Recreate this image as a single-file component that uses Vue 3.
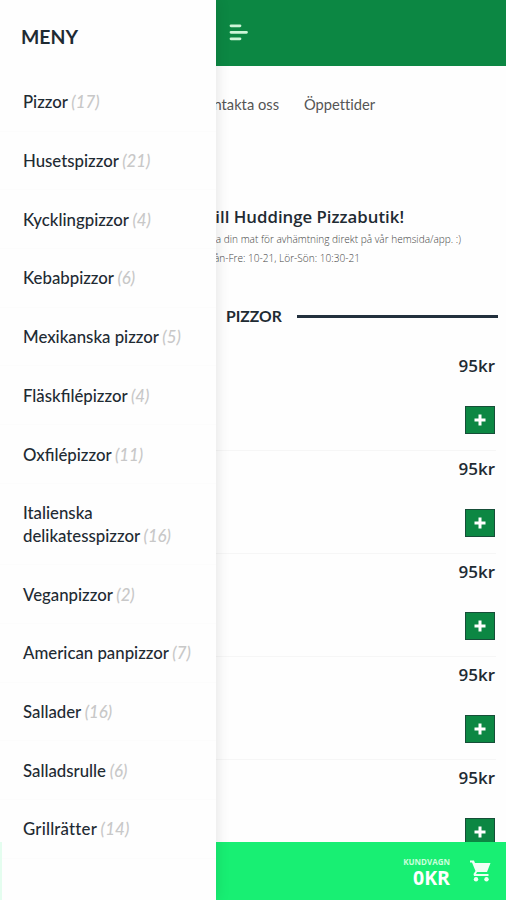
<script setup>
const categories = [
  ['Pizzor', 17],
  ['Husetspizzor', 21],
  ['Kycklingpizzor', 4],
  ['Kebabpizzor', 6],
  ['Mexikanska pizzor', 5],
  ['Fläskfilépizzor', 4],
  ['Oxfilépizzor', 11],
  ['Italienska delikatesspizzor', 16],
  ['Veganpizzor', 2],
  ['American panpizzor', 7],
  ['Sallader', 16],
  ['Salladsrulle', 6],
  ['Grillrätter', 14],
]
const prices = ['95kr', '95kr', '95kr', '95kr', '95kr']
</script>

<template>
  <div class="screen">
    <div class="page">
      <header class="topbar">
        <svg class="burger" viewBox="0 0 20 18" width="20" height="18">
          <path d="M3 2.8H12M3 9.300H18.500M3 15.800H12" stroke="#cdf5d8" stroke-width="2.8" stroke-linecap="round" />
        </svg>
      </header>
      <nav class="nav">
        <a class="contact">Kontakta oss</a>
        <a>Öppettider</a>
      </nav>
      <section class="intro">
        <h1>till Huddinge Pizzabutik!</h1>
        <p class="lead">beställa din mat för avhämtning direkt på vår hemsida/app. :)</p>
        <p class="hours">Mån-Fre: 10-21, Lör-Sön: 10:30-21</p>
      </section>
      <div class="section-title">
        <h2>PIZZOR</h2>
        <span class="rule"></span>
      </div>
      <div class="products">
        <div v-for="(price, i) in prices" :key="i" class="product">
          <span class="price">{{ price }}</span>
          <button class="add">
            <svg viewBox="0 0 12 12" width="12" height="12">
              <path d="M6 0.500V11.500M0.500 6H11.500" stroke="#fff" stroke-width="3" />
            </svg>
          </button>
        </div>
      </div>
    </div>

    <footer class="cart">
      <div class="cart-text">
        <span class="cart-label">KUNDVAGN</span>
        <span class="cart-total">0KR</span>
      </div>
      <svg class="cart-icon" viewBox="0 0 21 22" width="21" height="22">
        <path fill="#f0fff5" d="M0 0.500H4L5 3H20.500L17 12H7L6 14H18.500V16H4L3.500 14 5.500 11 2 2.500H0Z" />
        <circle cx="6" cy="19.200" r="2.200" fill="#f0fff5" />
        <circle cx="16.500" cy="19.200" r="2.200" fill="#f0fff5" />
      </svg>
    </footer>

    <aside class="drawer">
      <h3>MENY</h3>
      <ul>
        <li v-for="[name, count] in categories" :key="name" :class="{ plain: name.includes('tt') }">
          {{ name }} <em>({{ count }})</em>
        </li>
      </ul>
      <div class="drawer-foot"></div>
    </aside>
  </div>
</template>

<style>
body {
  margin: 0;
}
</style>

<style scoped>
.screen {
  position: relative;
  width: 506px;
  height: 900px;
  overflow: hidden;
  background: #fefefe;
  color: #1f2b33;
  font-family: "Open Sans", sans-serif;
}
h1, h2, h3, p, ul {
  margin: 0;
  padding: 0;
  white-space: nowrap;
}
.page {
  height: 842px;
  overflow: hidden;
}
.topbar {
  height: 66px;
  box-sizing: border-box;
  padding: 23px 0 0 228px;
  background: #0c8743;
}
.burger {
  display: block;
  fill: none;
}
.nav {
  display: flex;
  gap: 25px;
  height: 78px;
  padding-left: 193px;
  font: 14.700px/76px "Lato", sans-serif;
  font-variant-ligatures: none;
  color: #555;
}
.contact {
  width: 86px;
  display: flex;
  justify-content: flex-end;
  white-space: nowrap;
}
.intro {
  display: flex;
  flex-direction: column;
  align-items: flex-end;
  height: 144px;
  box-sizing: border-box;
  padding-top: 61px;
}
h1 {
  margin-right: 102px;
  font-size: 16.800px;
  line-height: 24px;
  font-weight: 600;
}
.lead, .hours {
  font-size: 10.100px;
  line-height: 19px;
  font-weight: 300;
  color: #444;
}
.lead {
  margin-top: 1px;
  margin-right: 45px;
}
.hours {
  margin-right: 146px;
}
.section-title {
  display: flex;
  align-items: center;
  gap: 15px;
  height: 56px;
  padding: 0 8px 2px 226px;
}
h2 {
  font: bold 15.700px/20px "Lato", sans-serif;
}
.rule {
  flex: 1;
  height: 3px;
  background: #22303d;
}
.products {
  margin: 2px 10px 0 0;
}
.product {
  display: flex;
  flex-direction: column;
  align-items: flex-end;
  box-sizing: border-box;
  height: 103px;
  padding: 6px 1px 0 0;
  border-bottom: 1px solid #f6f6f6;
}
.price {
  font-size: 17px;
  line-height: 24px;
  font-weight: 600;
}
.add {
  display: flex;
  align-items: center;
  justify-content: center;
  box-sizing: border-box;
  width: 30px;
  height: 28px;
  margin-top: 28px;
  padding: 0;
  background: #0c8743;
  border: 1px solid #164e38;
}
.cart {
  display: flex;
  justify-content: flex-end;
  height: 58px;
  box-sizing: border-box;
  padding: 15px 15px 0 0;
  gap: 20px;
  background: #18ef73;
  color: #fff;
}
.cart-text {
  display: flex;
  flex-direction: column;
  align-items: flex-end;
  font-weight: 700;
}
.cart-label {
  font-size: 8px;
  line-height: 10px;
  color: #c9ffdb;
}
.cart-total {
  font-size: 19.500px;
  line-height: 22px;
}
.cart-icon {
  margin-top: 3px;
}
.drawer {
  position: absolute;
  top: 0;
  left: 0;
  width: 216px;
  height: 900px;
  box-sizing: border-box;
  display: flex;
  flex-direction: column;
  background: #fefefe;
  box-shadow: 0 0 14px rgba(0, 0, 0, 0.12);
  font-family: "Lato", sans-serif;
}
h3 {
  flex: none;
  height: 73px;
  padding-left: 21px;
  font-size: 19.400px;
  line-height: 74px;
  font-weight: 700;
}
ul {
  height: 769px;
  list-style: none;
}
li {
  padding: 18.400px 20px 16.600px 23px;
  font-size: 16.800px;
  line-height: 22.700px;
  font-weight: 500;
  white-space: normal;
  border-bottom: 1px solid #fcfcfc;
}
.plain {
  font-variant-ligatures: none;
  letter-spacing: 0.200px;
}
em {
  margin-left: -0.500px;
  color: #c8c8c8;
}
.drawer-foot {
  flex: none;
  width: 2px;
  height: 58px;
  background: #e4fdef;
}
</style>
